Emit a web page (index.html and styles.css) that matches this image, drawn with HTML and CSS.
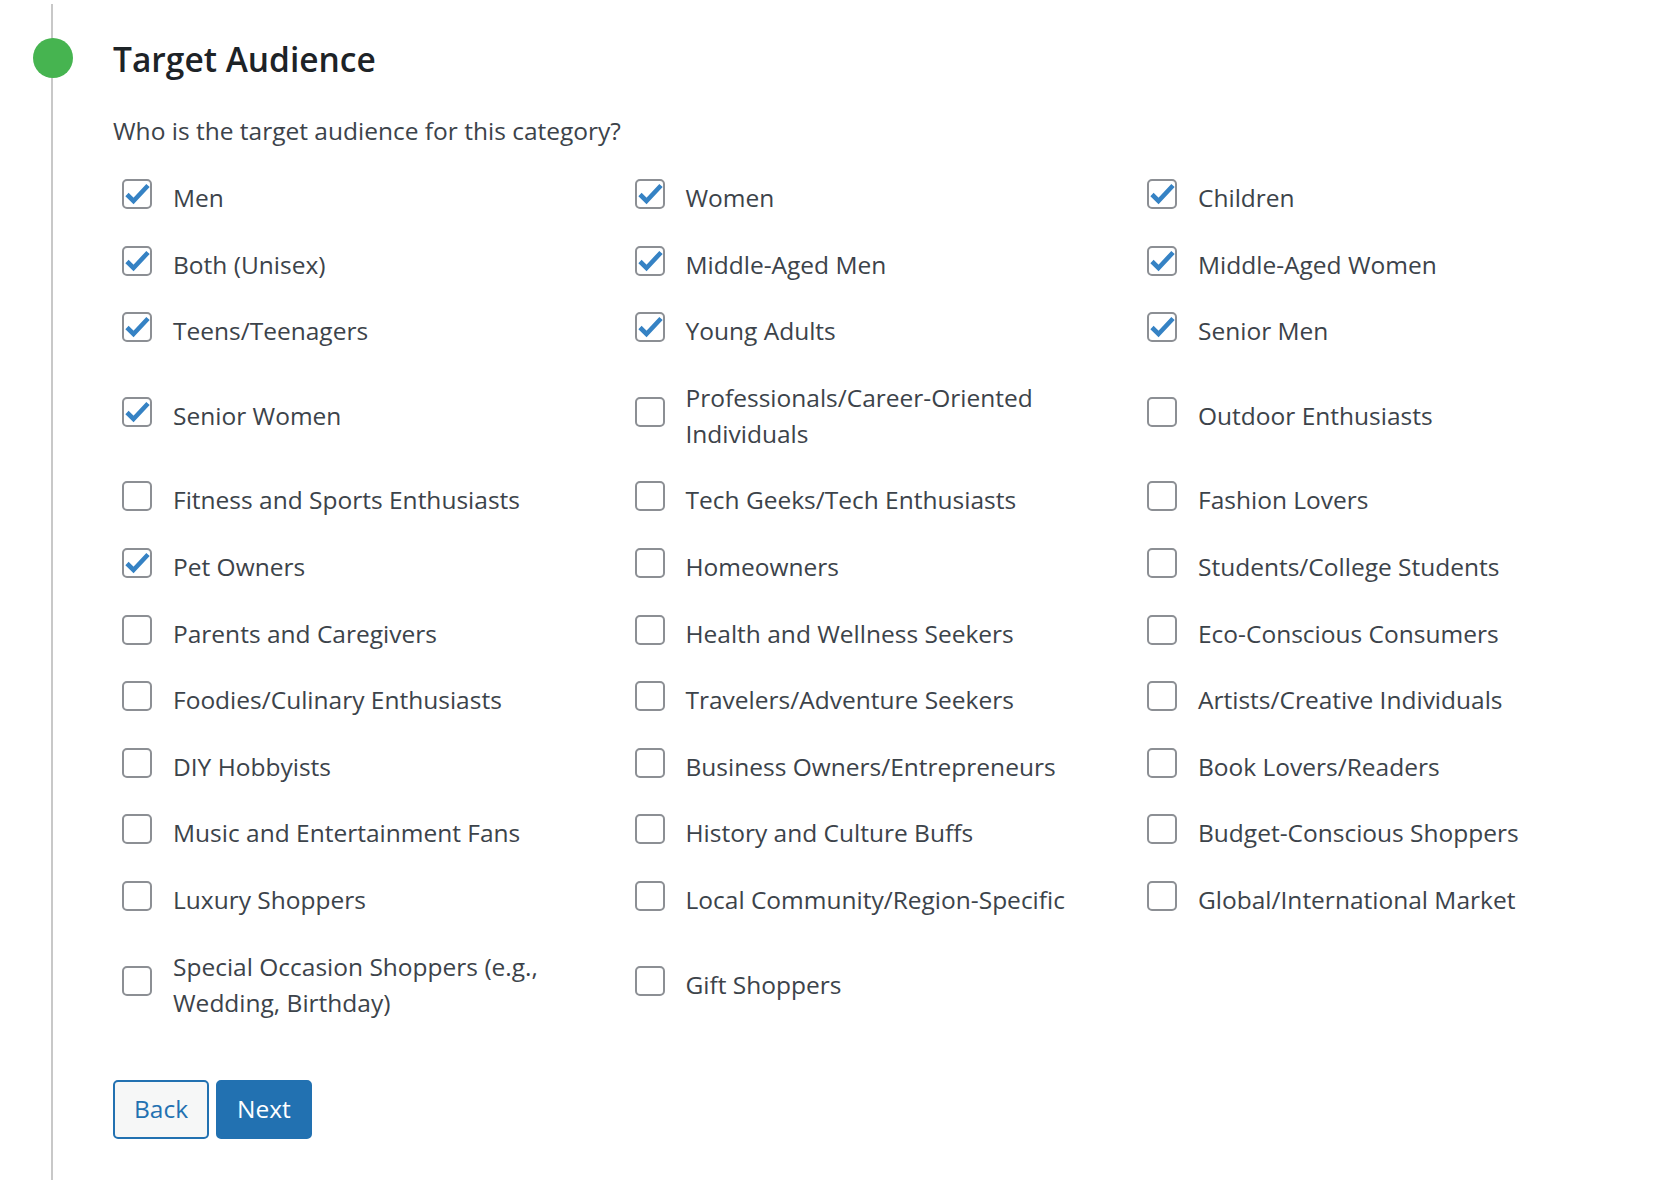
FILE: index.html
```html
<!DOCTYPE html>
<html lang="en">
<head>
<meta charset="utf-8">
<title>Target Audience</title>
<link rel="stylesheet" href="styles.css">
</head>
<body>
<div class="step">
  <span class="step-dot"></span>
  <h2 class="step-title">Target Audience</h2>
  <p class="step-question">Who is the target audience for this category?</p>
  <div class="options">
    <label class="opt"><span class="box on"><svg viewBox="2 2 26 26"><polyline points="5,15.5 11.5,22 26,6.5"/></svg></span><span class="txt">Men</span></label>
    <label class="opt"><span class="box on"><svg viewBox="2 2 26 26"><polyline points="5,15.5 11.5,22 26,6.5"/></svg></span><span class="txt">Women</span></label>
    <label class="opt"><span class="box on"><svg viewBox="2 2 26 26"><polyline points="5,15.5 11.5,22 26,6.5"/></svg></span><span class="txt">Children</span></label>

    <label class="opt"><span class="box on"><svg viewBox="2 2 26 26"><polyline points="5,15.5 11.5,22 26,6.5"/></svg></span><span class="txt">Both (Unisex)</span></label>
    <label class="opt"><span class="box on"><svg viewBox="2 2 26 26"><polyline points="5,15.5 11.5,22 26,6.5"/></svg></span><span class="txt">Middle-Aged Men</span></label>
    <label class="opt"><span class="box on"><svg viewBox="2 2 26 26"><polyline points="5,15.5 11.5,22 26,6.5"/></svg></span><span class="txt">Middle-Aged Women</span></label>

    <label class="opt"><span class="box on"><svg viewBox="2 2 26 26"><polyline points="5,15.5 11.5,22 26,6.5"/></svg></span><span class="txt">Teens/Teenagers</span></label>
    <label class="opt"><span class="box on"><svg viewBox="2 2 26 26"><polyline points="5,15.5 11.5,22 26,6.5"/></svg></span><span class="txt">Young Adults</span></label>
    <label class="opt"><span class="box on"><svg viewBox="2 2 26 26"><polyline points="5,15.5 11.5,22 26,6.5"/></svg></span><span class="txt">Senior Men</span></label>

    <label class="opt"><span class="box on"><svg viewBox="2 2 26 26"><polyline points="5,15.5 11.5,22 26,6.5"/></svg></span><span class="txt">Senior Women</span></label>
    <label class="opt"><span class="box"></span><span class="txt">Professionals/Career-Oriented Individuals</span></label>
    <label class="opt"><span class="box"></span><span class="txt">Outdoor Enthusiasts</span></label>

    <label class="opt"><span class="box"></span><span class="txt">Fitness and Sports Enthusiasts</span></label>
    <label class="opt"><span class="box"></span><span class="txt">Tech Geeks/Tech Enthusiasts</span></label>
    <label class="opt"><span class="box"></span><span class="txt">Fashion Lovers</span></label>

    <label class="opt"><span class="box on"><svg viewBox="2 2 26 26"><polyline points="5,15.5 11.5,22 26,6.5"/></svg></span><span class="txt">Pet Owners</span></label>
    <label class="opt"><span class="box"></span><span class="txt">Homeowners</span></label>
    <label class="opt"><span class="box"></span><span class="txt">Students/College Students</span></label>

    <label class="opt"><span class="box"></span><span class="txt">Parents and Caregivers</span></label>
    <label class="opt"><span class="box"></span><span class="txt">Health and Wellness Seekers</span></label>
    <label class="opt"><span class="box"></span><span class="txt">Eco-Conscious Consumers</span></label>

    <label class="opt"><span class="box"></span><span class="txt">Foodies/Culinary Enthusiasts</span></label>
    <label class="opt"><span class="box"></span><span class="txt">Travelers/Adventure Seekers</span></label>
    <label class="opt"><span class="box"></span><span class="txt">Artists/Creative Individuals</span></label>

    <label class="opt"><span class="box"></span><span class="txt">DIY Hobbyists</span></label>
    <label class="opt"><span class="box"></span><span class="txt">Business Owners/Entrepreneurs</span></label>
    <label class="opt"><span class="box"></span><span class="txt">Book Lovers/Readers</span></label>

    <label class="opt"><span class="box"></span><span class="txt">Music and Entertainment Fans</span></label>
    <label class="opt"><span class="box"></span><span class="txt">History and Culture Buffs</span></label>
    <label class="opt"><span class="box"></span><span class="txt">Budget-Conscious Shoppers</span></label>

    <label class="opt"><span class="box"></span><span class="txt">Luxury Shoppers</span></label>
    <label class="opt"><span class="box"></span><span class="txt">Local Community/Region-Specific</span></label>
    <label class="opt"><span class="box"></span><span class="txt">Global/International Market</span></label>

    <label class="opt"><span class="box"></span><span class="txt">Special Occasion Shoppers (e.g., Wedding, Birthday)</span></label>
    <label class="opt"><span class="box"></span><span class="txt">Gift Shoppers</span></label>
  </div>
  <div class="actions">
    <button class="btn btn-secondary" type="button">Back</button>
    <button class="btn btn-primary" type="button">Next</button>
  </div>
</div>
</body>
</html>
```

FILE: styles.css
```css
html, body {
  margin: 0;
  padding: 0;
  background: #ffffff;
}

body {
  font-family: "Open Sans", "Noto Sans", "Liberation Sans", sans-serif;
  color: #3c434a;
  font-size: 24.5px;
}

.step {
  position: relative;
  margin: 4px 0 0 51px;
  border-left: 2px solid #c8c8c8;
  padding: 35px 6px 0 60px;
  min-height: 1176px;
  box-sizing: border-box;
}

.step-dot {
  position: absolute;
  left: -20px;
  top: 34px;
  width: 40px;
  height: 40px;
  border-radius: 50%;
  background: #46b450;
}

.step-title {
  margin: 0;
  font-size: 33.5px;
  line-height: 40px;
  font-weight: 600;
  color: #1d2327;
}

.step-question {
  margin: 33.5px 0 0;
  font-size: 24.5px;
  line-height: 36px;
}

.options {
  display: grid;
  grid-template-columns: repeat(3, 512.5px);
  row-gap: 30.6px;
  margin: 31.5px 0 0 9px;
}

.opt {
  display: flex;
  align-items: center;
  gap: 21px;
  line-height: 36px;
}

.txt {
  max-width: 440px;
}

.box {
  flex: none;
  box-sizing: border-box;
  width: 30px;
  height: 30px;
  margin-top: -8px;
  border: 2px solid #8c8f94;
  border-radius: 5px;
  background: #ffffff;
}

.box svg {
  display: block;
  width: 26px;
  height: 26px;
  fill: none;
  stroke: #3582c4;
  stroke-width: 4.6;
  stroke-linejoin: miter;
  stroke-linecap: butt;
}

.actions {
  display: flex;
  gap: 7px;
  margin-top: 59.5px;
}

.btn {
  box-sizing: border-box;
  height: 59px;
  padding: 0 19px;
  border: 2px solid #2271b1;
  border-radius: 5px;
  font-family: inherit;
  font-size: 24.5px;
  line-height: 1;
  cursor: pointer;
}

.btn-secondary {
  background: #f6f7f7;
  color: #2271b1;
}

.btn-primary {
  background: #2271b1;
  color: #ffffff;
}
```
